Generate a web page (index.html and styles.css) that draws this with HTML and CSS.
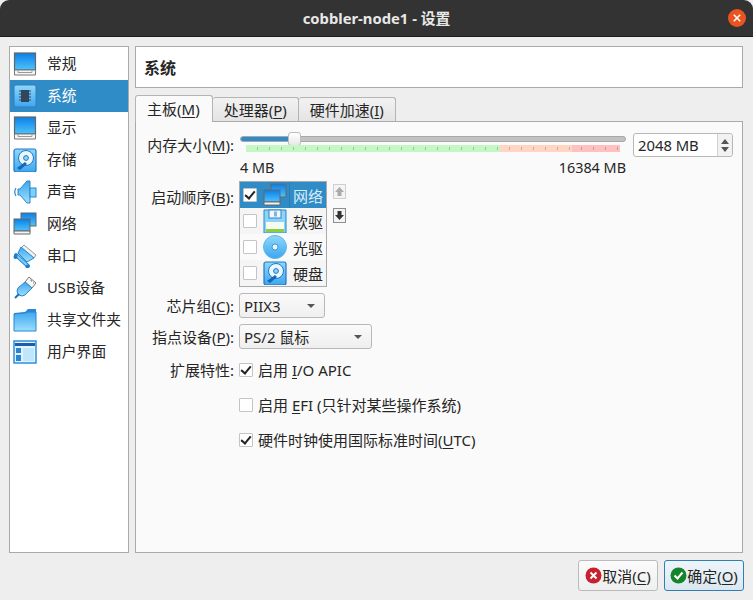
FILE: index.html
```html
<!DOCTYPE html>
<html>
<head>
<meta charset="utf-8">
<title>cobbler-node1 - 设置</title>
<link rel="stylesheet" href="styles.css">
</head>
<body>
<svg class="defs" width="0" height="0">
  <defs>
    <linearGradient id="blue" x1="0" y1="0" x2="0" y2="1"><stop offset="0" stop-color="#0a7fe8"/><stop offset="1" stop-color="#4fc3fb"/></linearGradient>
    <linearGradient id="pale" x1="0" y1="0" x2="0" y2="1"><stop offset="0" stop-color="#8ed8fb"/><stop offset="1" stop-color="#3ea6ee"/></linearGradient>
    <linearGradient id="sky" x1="0" y1="0" x2="0" y2="1"><stop offset="0" stop-color="#3ea6ee"/><stop offset="1" stop-color="#9be0fd"/></linearGradient>
    <symbol id="i-screen" viewBox="0 0 24 24">
      <rect x="1.500" y="1" width="21" height="17" fill="url(#blue)" stroke="#666" stroke-width="1.200"/>
      <path d="M1.500 18h21v5h-21z" fill="#f7f7f7" stroke="#777"/>
      <path d="M5 18.500v2h14v-2" fill="none" stroke="#999"/>
    </symbol>
    <symbol id="i-chip" viewBox="0 0 24 24">
      <rect x="1" y="1" width="22" height="22" rx="2" fill="url(#pale)" stroke="#2f7fc0"/>
      <rect x="8" y="6" width="8" height="12" fill="#30475c"/>
      <path d="M6 7h12M6 10h12M6 13h12M6 16h12" stroke="#30475c" stroke-width="1"/>
    </symbol>
    <symbol id="i-disk" viewBox="0 0 24 24">
      <rect x="1" y="1" width="22" height="23" rx="2" fill="url(#pale)" stroke="#1e78c8" stroke-width="1.200"/>
      <circle cx="13" cy="10" r="7.500" fill="#eaf7ff" stroke="#1e78c8"/>
      <circle cx="13" cy="10" r="2.400" fill="#8fd3f8" stroke="#1e78c8"/>
      <path d="M4 20l8-6 2 2-7 6z" fill="#1565b8"/>
    </symbol>
    <symbol id="i-sound" viewBox="0 0 24 24">
      <path d="M14 1h3v22h-3l-7-8H5V9h2z" fill="url(#sky)" stroke="#2a86d0"/>
      <rect x="17" y="8" width="6" height="9" fill="#7fd0f8" stroke="#2a86d0"/>
      <path d="M3 8q-2.500 4 0 8" fill="none" stroke="#2a86d0" stroke-width="1.200"/>
    </symbol>
    <symbol id="i-net" viewBox="0 0 24 24">
      <rect x="8" y="1" width="15" height="13" fill="url(#blue)" stroke="#666"/>
      <rect x="1" y="7" width="16" height="12" fill="url(#blue)" stroke="#666"/>
      <path d="M1 19h16v3H1z" fill="#f4f4f4" stroke="#666"/>
    </symbol>
    <symbol id="i-serial" viewBox="0 0 24 24">
      <path d="M11 1l12 10-2 3L8 4z" fill="#f0f0f0" stroke="#999"/>
      <path d="M8 3l13 11-7 4L5 9z" fill="url(#sky)" stroke="#2a86d0"/>
      <path d="M3 11l12 11" stroke="#2a86d0" stroke-width="4" stroke-linecap="round"/>
      <path d="M4 12l10 9" stroke="#7fd0f8" stroke-width="2"/>
      <circle cx="2.500" cy="13" r="2" fill="#1e78c8"/>
      <circle cx="14" cy="22.500" r="1.500" fill="#1e78c8"/>
    </symbol>
    <symbol id="i-usb" viewBox="0 0 24 24">
      <path d="M16 1l7 6-4 5-7-6z" fill="#f6f6f6" stroke="#777"/>
      <path d="M17.500 4l1.500 1.300M20 6.500l.8.7" stroke="#555"/>
      <path d="M12 6l7 6-7 7q-3 2-6 0l-1-1q-2-3 0-6z" fill="url(#sky)" stroke="#2a86d0"/>
      <path d="M6 18l-4 4" stroke="#1e6fb8" stroke-width="2"/>
    </symbol>
    <symbol id="i-folder" viewBox="0 0 24 24">
      <path d="M1 5l11-1 3-3h8v22H1z" fill="#2a86d8"/>
      <path d="M1 6l11-1 3-1 8 0v19H1z" fill="url(#sky)" stroke="#2a86d0"/>
    </symbol>
    <symbol id="i-ui" viewBox="0 0 24 24">
      <rect x="1" y="1" width="22" height="22" fill="#e2f3fd" stroke="#1e88dc" stroke-width="1.400"/>
      <rect x="2" y="3" width="20" height="3" fill="#1c5fa8"/>
      <rect x="3" y="8" width="5" height="5" fill="#2a86d0"/>
      <rect x="3" y="15" width="5" height="6" fill="#2a86d0"/>
      <rect x="10" y="8" width="11" height="13" fill="#bfe6fb"/>
    </symbol>
    <symbol id="i-floppy" viewBox="0 0 24 24">
      <path d="M1 1h22v23H1z" fill="#8ed4f8" stroke="#2a86d0"/>
      <rect x="6" y="1" width="12" height="8" fill="#f4f8fb" stroke="#2a86d0"/>
      <rect x="11" y="2.500" width="3" height="5" fill="#7fb6dc"/>
      <rect x="3" y="13" width="18" height="10" fill="#f6fbf2"/>
      <rect x="3" y="20" width="18" height="3" fill="#8ccf3c"/>
    </symbol>
    <symbol id="i-cd" viewBox="0 0 24 24">
      <circle cx="12" cy="12" r="11.500" fill="url(#pale)" stroke="#5cb8ee"/>
      <circle cx="12" cy="12" r="3" fill="#e6f6fe" stroke="#3f97d8"/>
    </symbol>
  </defs>
</svg>

<div class="window">
  <div class="titlebar">
    <span class="title">cobbler-node1 - 设置</span>
    <span class="closeBtn">
      <svg width="18" height="18" viewBox="0 0 18 18"><circle cx="9" cy="9" r="9" fill="#e95420"/><path d="M5.800 5.800l6.400 6.400M12.200 5.800l-6.400 6.400" stroke="#fff" stroke-width="1.600"/></svg>
    </span>
  </div>

  <div class="content">
    <ul class="sideList">
      <li><svg class="sideIcon"><use href="#i-screen"/></svg>常规</li>
      <li class="selected"><svg class="sideIcon"><use href="#i-chip"/></svg>系统</li>
      <li><svg class="sideIcon"><use href="#i-screen"/></svg>显示</li>
      <li><svg class="sideIcon"><use href="#i-disk"/></svg>存储</li>
      <li><svg class="sideIcon"><use href="#i-sound"/></svg>声音</li>
      <li><svg class="sideIcon"><use href="#i-net"/></svg>网络</li>
      <li><svg class="sideIcon"><use href="#i-serial"/></svg>串口</li>
      <li><svg class="sideIcon"><use href="#i-usb"/></svg>USB设备</li>
      <li><svg class="sideIcon"><use href="#i-folder"/></svg>共享文件夹</li>
      <li><svg class="sideIcon"><use href="#i-ui"/></svg>用户界面</li>
    </ul>

    <div class="mainCol">
      <div class="pageHead">系统</div>

      <div class="tabs">
        <div class="tab active">主板(<u>M</u>)</div>
        <div class="tab">处理器(<u>P</u>)</div>
        <div class="tab">硬件加速(<u>I</u>)</div>
      </div>

      <div class="panel">
        <div class="formRow memRow">
          <label class="rowLabel">内存大小(<u>M</u>):</label>
          <div class="memBox">
            <div class="slider">
              <div class="groove"><div class="grooveFill"></div></div>
              <div class="handle"></div>
            </div>
            <div class="scale">
              <div class="seg segGreen"></div>
              <div class="seg segOrange"></div>
              <div class="seg segRed"></div>
            </div>
            <div class="scaleText"><span>4 MB</span><span>16384 MB</span></div>
          </div>
          <div class="spin">
            <span>2048 MB</span>
            <div class="spinArrows"><i class="arrowUp"></i><i class="arrowDown"></i></div>
          </div>
        </div>

        <div class="formRow bootRow">
          <label class="rowLabel">启动顺序(<u>B</u>):</label>
          <div class="bootList">
            <div class="bootItem current"><span class="check on"></span><svg class="bootIcon"><use href="#i-net"/></svg><span class="bootName">网络</span></div>
            <div class="bootItem"><span class="check"></span><svg class="bootIcon"><use href="#i-floppy"/></svg><span class="bootName">软驱</span></div>
            <div class="bootItem"><span class="check"></span><svg class="bootIcon"><use href="#i-cd"/></svg><span class="bootName">光驱</span></div>
            <div class="bootItem"><span class="check"></span><svg class="bootIcon"><use href="#i-disk"/></svg><span class="bootName">硬盘</span></div>
          </div>
          <div class="moveBtns">
            <div class="moveBtn disabled"><svg width="9" height="9" viewBox="0 0 9 9"><path d="M4.500 0L9 5H6.500v4h-4V5H0z" fill="#aaa"/></svg></div>
            <div class="moveBtn"><svg width="9" height="9" viewBox="0 0 9 9"><path d="M4.500 9L0 4h2.500V0h4v4H9z" fill="#333"/></svg></div>
          </div>
        </div>

        <div class="formRow comboRow">
          <label class="rowLabel">芯片组(<u>C</u>):</label>
          <div class="combo comboShort"><span>PIIX3</span><i class="comboArrow"></i></div>
        </div>
        <div class="formRow comboRow">
          <label class="rowLabel">指点设备(<u>P</u>):</label>
          <div class="combo comboLong"><span>PS/2 鼠标</span><i class="comboArrow"></i></div>
        </div>

        <div class="formRow extRow">
          <label class="rowLabel">扩展特性:</label>
          <div class="option"><span class="check on"></span>启用 <u>I</u>/O APIC</div>
        </div>
        <div class="formRow extRow">
          <label class="rowLabel"></label>
          <div class="option"><span class="check"></span>启用 <u>E</u>FI (只针对某些操作系统)</div>
        </div>
        <div class="formRow extRow">
          <label class="rowLabel"></label>
          <div class="option"><span class="check on"></span>硬件时钟使用国际标准时间(<u>U</u>TC)</div>
        </div>
      </div>
    </div>
  </div>

  <div class="footer">
    <div class="btn">
      <svg width="17" height="17" viewBox="0 0 17 17"><circle cx="8.500" cy="8.500" r="8" fill="#c8202f"/><path d="M5.500 5.500l6 6M11.500 5.500l-6 6" stroke="#fff" stroke-width="2"/></svg>取消(<u>C</u>)
    </div>
    <div class="btn primary">
      <svg width="17" height="17" viewBox="0 0 17 17"><circle cx="8.500" cy="8.500" r="8" fill="#16842c"/><path d="M4.500 8.500l3 3 5-6" fill="none" stroke="#fff" stroke-width="2"/></svg>确定(<u>O</u>)
    </div>
  </div>
</div>
</body>
</html>
```

FILE: styles.css
```css
html, body {
    margin: 0;
    padding: 0;
    background: #eeeeee;
}
body {
    color: #262626;
    font: 15px/18px "Noto Sans", "Noto Sans CJK SC", sans-serif;
}
u {
    text-underline-offset: 2px;
}
.defs {
    display: block;
    height: 0;
}
.window {
    width: 753px;
    height: 600px;
    display: flex;
    flex-direction: column;
    overflow: hidden;
}
.titlebar {
    height: 36px;
    flex: none;
    display: flex;
    align-items: center;
    justify-content: center;
    position: relative;
    background: #333333;
    border-bottom: 1px solid #1d1d1d;
    border-radius: 9px 9px 0 0;
    color: #e8e8e8;
    font-size: 14.8px;
    font-weight: bold;
}
.closeBtn {
    position: absolute;
    top: 9px;
    right: 7px;
    height: 18px;
}
.content {
    flex: none;
    height: 507px;
    margin-top: 9px;
    padding: 0 9px;
    display: flex;
    gap: 6px;
}
.sideList {
    width: 118px;
    flex: none;
    margin: 0;
    padding: 1px 0 0;
    list-style: none;
    background: #fff;
    border: 1px solid #aaaaaa;
}
.sideList li {
    height: 32px;
    box-sizing: border-box;
    display: flex;
    align-items: center;
    gap: 10px;
    padding: 0 0 2px 3px;
    font-size: 14.8px;
}
.sideList li.selected {
    background: #308cc6;
    color: #fff;
}
.sideIcon {
    width: 24px;
    height: 24px;
    flex: none;
    margin-top: 2px;
}
.mainCol {
    width: 608px;
    flex: none;
    display: flex;
    flex-direction: column;
}
.pageHead {
    height: 40px;
    line-height: 42px;
    padding-left: 8px;
    background: #fff;
    border: 1px solid #aaaaaa;
    font-size: 16px;
    font-weight: bold;
}
.tabs {
    display: flex;
    margin-top: 7px;
    height: 27px;
    position: relative;
}
.tab {
    height: 23px;
    margin-top: 2px;
    padding: 0 11px;
    line-height: 24px;
    background: linear-gradient(#f2f2f2, #e4e4e4);
    border: 1px solid #b4b4b4;
    border-bottom: none;
    border-left: none;
    border-radius: 3px 3px 0 0;
}
.tab.active {
    height: 26px;
    margin-top: 0;
    padding: 0 12px 0 11px;
    line-height: 26px;
    background: #fafafa;
    border-left: 1px solid #b4b4b4;
    position: relative;
    z-index: 1;
}
.panel {
    flex: 1;
    margin-top: -1px;
    padding: 10px 0 0;
    background: #fafafa;
    border: 1px solid #aaaaaa;
}
.formRow {
    display: flex;
    align-items: flex-start;
}
.rowLabel {
    width: 98px;
    flex: none;
    text-align: right;
}
.memRow .rowLabel {
    padding-top: 4px;
}
.memBox {
    width: 386px;
    margin-left: 6px;
}
.slider {
    height: 13px;
    position: relative;
    display: flex;
    align-items: center;
}
.groove {
    flex: 1;
    height: 4px;
    background: #c2c2c2;
    border: 1px solid #a8a8a8;
    border-radius: 3px;
    overflow: hidden;
}
.grooveFill {
    width: 54px;
    height: 100%;
    background: #308cc6;
}
.handle {
    position: absolute;
    left: 48px;
    top: 0;
    width: 11px;
    height: 12px;
    background: linear-gradient(#ffffff, #e8e8e8);
    border: 1px solid #bdbdbd;
    border-radius: 3px;
}
.scale {
    display: flex;
    height: 7px;
    margin: 0 6px;
    position: relative;
}
.scale::after {
    content: "";
    position: absolute;
    left: 0;
    right: 0;
    top: 2px;
    height: 3px;
    background: repeating-linear-gradient(90deg, transparent 0, transparent 11px, rgba(90, 90, 90, 0.35) 11px, rgba(90, 90, 90, 0.35) 12px);
}
.seg {
    height: 100%;
}
.segGreen {
    width: 254px;
    background: #c4f7c4;
}
.segOrange {
    width: 72px;
    background: #ffd6c4;
}
.segRed {
    width: 48px;
    background: #ffc0c0;
}
.scaleText {
    display: flex;
    justify-content: space-between;
    margin-top: 7px;
    font-size: 14.4px;
}
.spin {
    margin: 1px 0 0 7px;
    display: flex;
    align-items: center;
    justify-content: space-between;
    padding-left: 4px;
    box-sizing: border-box;
    width: 100px;
    height: 24px;
    background: #fff;
    border: 1px solid #b8b8b8;
    border-radius: 3px;
    font-size: 14.8px;
}
.spinArrows {
    width: 14px;
    height: 100%;
    border-left: 1px solid #d0d0d0;
    display: flex;
    flex-direction: column;
    align-items: center;
    justify-content: center;
    gap: 3px;
    background: #f2f2f2;
    border-radius: 0 3px 3px 0;
}
.arrowUp, .arrowDown {
    width: 0;
    height: 0;
    border-left: 4px solid transparent;
    border-right: 4px solid transparent;
}
.arrowUp {
    border-bottom: 5px solid #555;
}
.arrowDown {
    border-top: 5px solid #555;
}
.bootRow {
    margin-top: 4px;
}
.bootRow .rowLabel {
    padding-top: 7px;
}
.bootList {
    width: 86px;
    margin-left: 5px;
    background: #fff;
    border: 1px solid #aaaaaa;
}
.bootItem {
    height: 26px;
    display: flex;
    align-items: center;
    padding-left: 3px;
    background: #fafafa;
}
.bootItem:nth-child(even) {
    background: #f5f5f5;
}
.bootItem.current {
    background: #308cc6;
    color: #d9ecf8;
}
.bootIcon {
    width: 24px;
    height: 24px;
    flex: none;
    margin-left: 6px;
}
.bootName {
    margin-left: 6px;
    padding-top: 2px;
    white-space: nowrap;
}
.bootItem.current .bootName {
    margin-left: 2px;
    padding-left: 3px;
    line-height: 24px;
    border-left: 1px solid #2a7cb2;
}
.moveBtns {
    margin: 3px 0 0 6px;
    display: flex;
    flex-direction: column;
    gap: 9px;
}
.moveBtn {
    width: 13px;
    height: 15px;
    display: flex;
    align-items: center;
    justify-content: center;
    background: #f4f4f4;
    border: 1px solid #8f8f8f;
    box-sizing: border-box;
}
.moveBtn.disabled {
    border-color: #cfcfcf;
}
.comboRow {
    align-items: center;
    margin-top: 6px;
}
.combo {
    height: 25px;
    box-sizing: border-box;
    margin-left: 5px;
    padding: 0 9px 0 4px;
    display: flex;
    align-items: center;
    justify-content: space-between;
    background: linear-gradient(#fafafa, #efefef);
    border: 1px solid #b8b8b8;
    border-radius: 3px;
}
.comboShort {
    width: 86px;
}
.comboLong {
    width: 133px;
}
.comboArrow {
    width: 0;
    height: 0;
    border-left: 4px solid transparent;
    border-right: 4px solid transparent;
    border-top: 4px solid #555;
}
.extRow {
    height: 18px;
    margin-top: 17px;
    align-items: center;
}
.comboRow + .extRow {
    margin-top: 12px;
}
.option {
    margin-left: 5px;
    display: flex;
    align-items: center;
    white-space: pre;
}
.option .check {
    margin-right: 5px;
}
.check {
    width: 12px;
    height: 12px;
    flex: none;
    position: relative;
    background: #fff;
    border: 1px solid #c4c4c4;
    border-radius: 1px;
    display: block;
}
.check.on::after {
    content: "";
    position: absolute;
    left: 3px;
    top: 0;
    width: 4px;
    height: 8px;
    border: solid #222;
    border-width: 0 2px 2px 0;
    transform: rotate(40deg);
}
.footer {
    flex: 1;
    display: flex;
    justify-content: flex-end;
    gap: 6px;
    padding: 7px 9px 0 0;
}
.btn {
    width: 80px;
    height: 31px;
    box-sizing: border-box;
    display: flex;
    align-items: center;
    justify-content: center;
    background: linear-gradient(#fbfbfb, #efefef);
    border: 1px solid #bbbbbb;
    border-radius: 3px;
}
.btn.primary {
    background: linear-gradient(#eef5fa, #dbe8f0);
    border-color: #2f7fb5;
}
```
